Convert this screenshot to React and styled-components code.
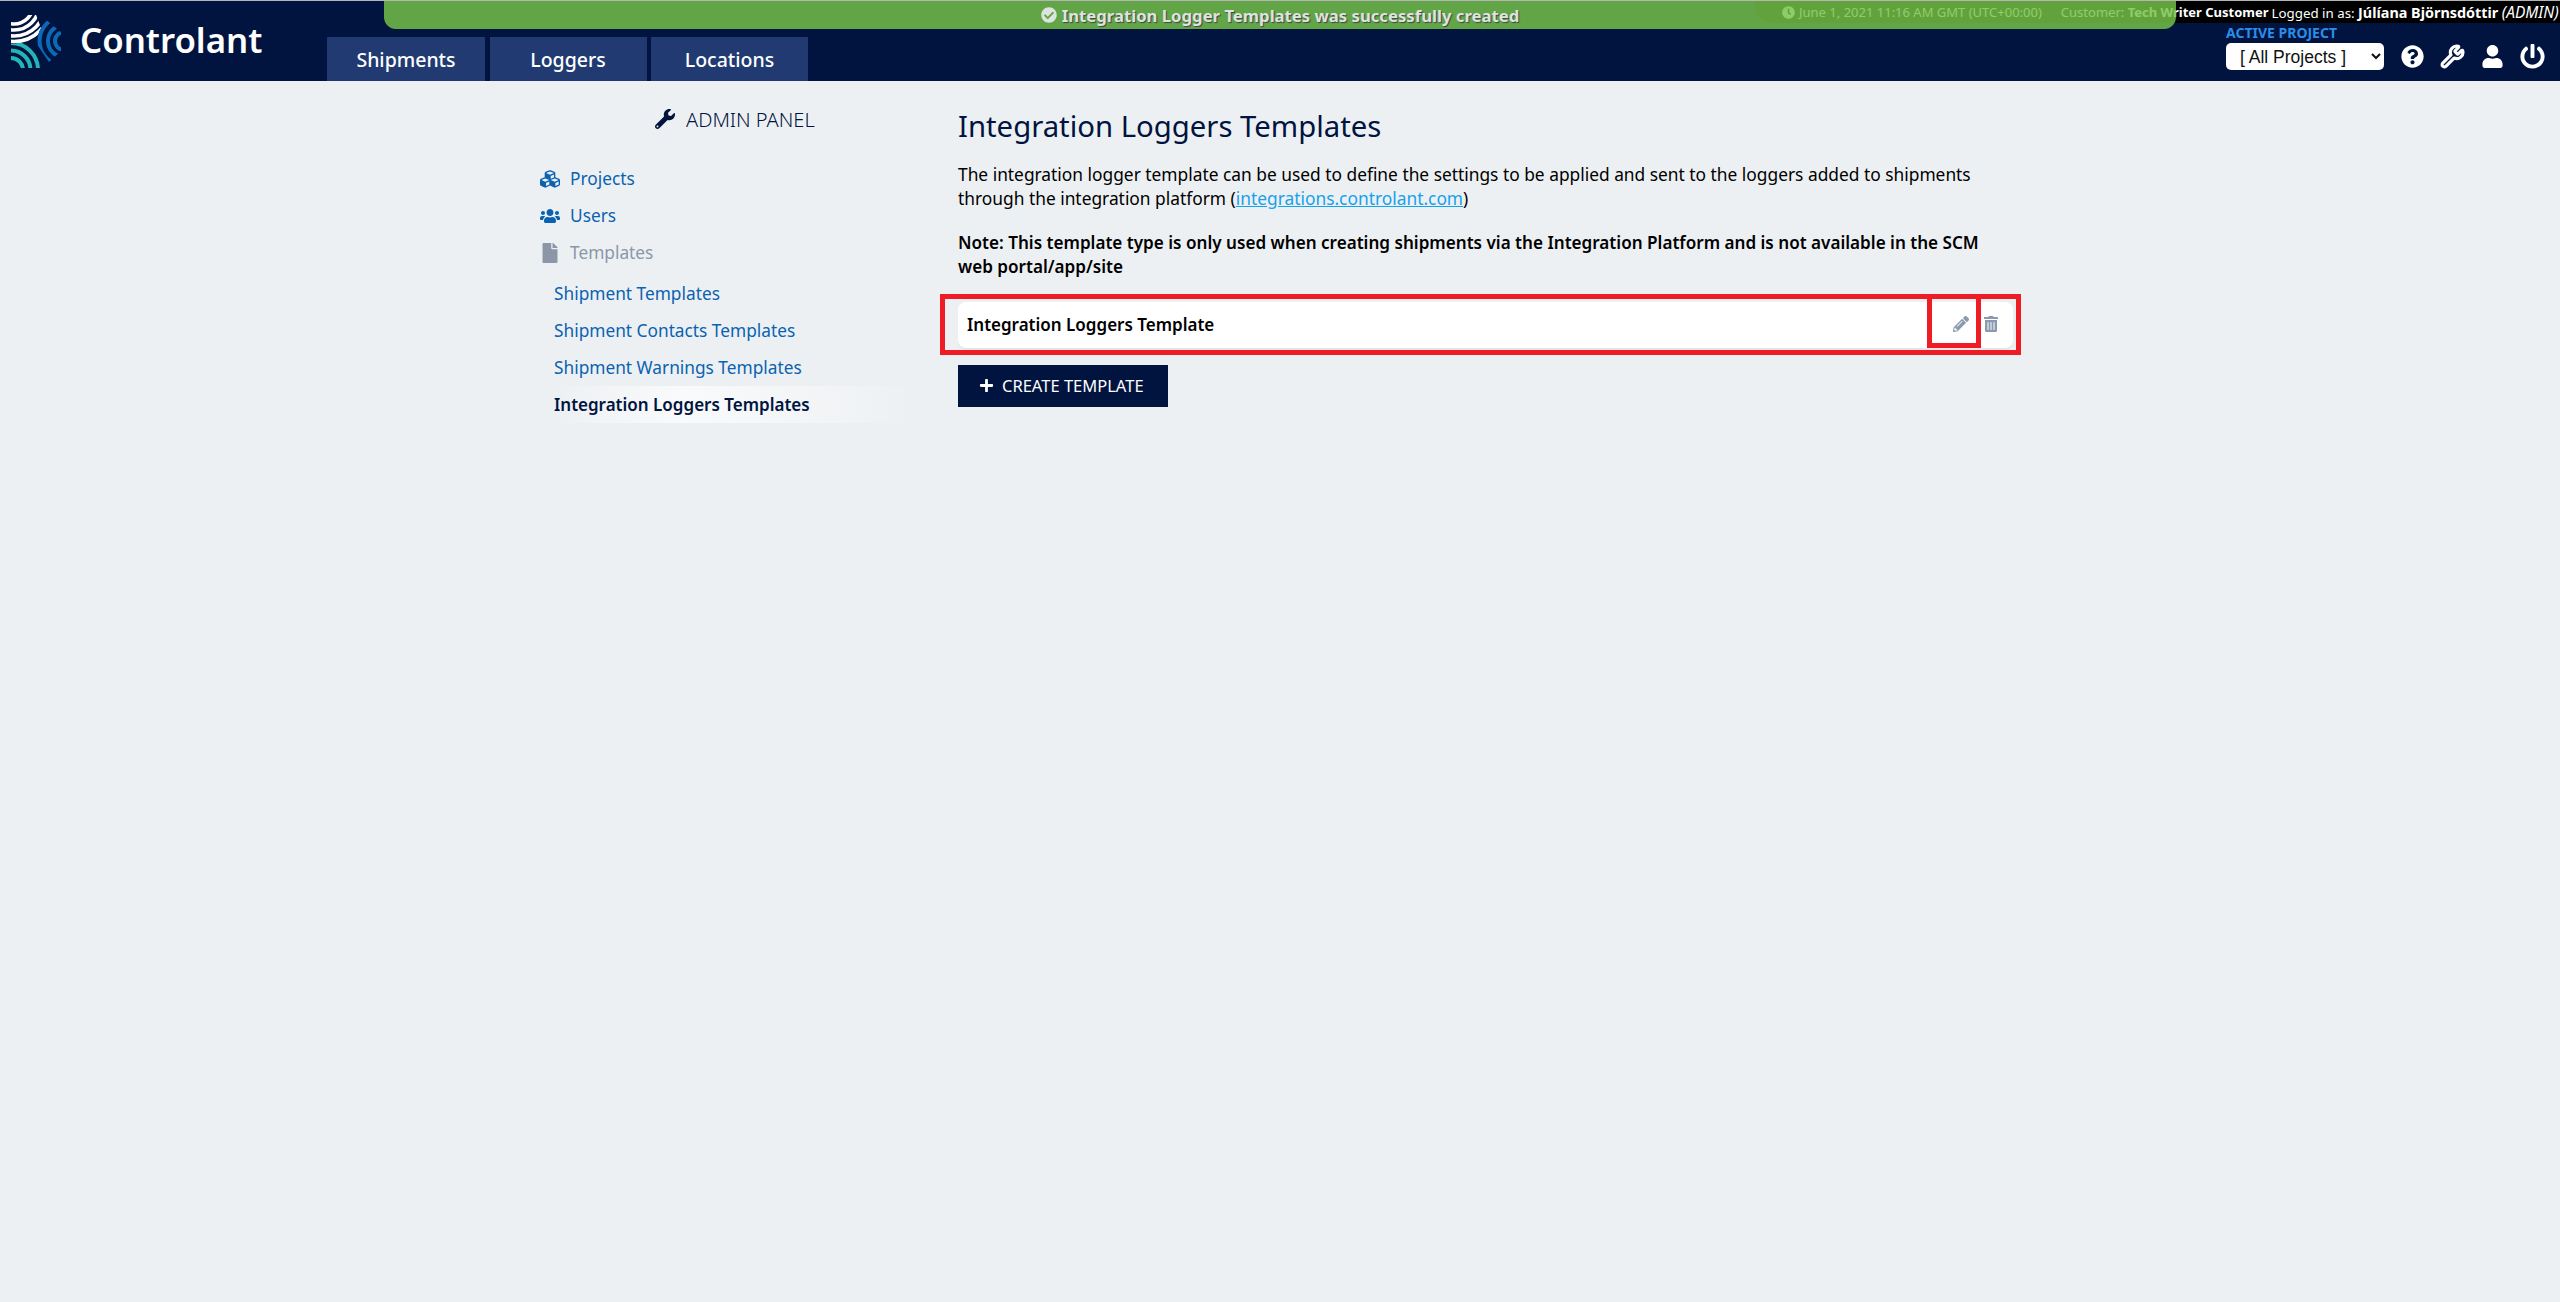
import React from 'react';
import styled, { createGlobalStyle } from 'styled-components';
import { FaWrench, FaCubes, FaUsers, FaFile, FaPencilAlt, FaTrashAlt, FaPlus, FaQuestionCircle, FaUser, FaPowerOff, FaClock, FaCheckCircle } from 'react-icons/fa';
import { Wrench } from 'lucide-react';

const NAVY = '#00143f';
const FONT = '"Noto Sans", "Open Sans", sans-serif';

const Global = createGlobalStyle`
  html, body { margin: 0; padding: 0; background: #edf0f3; }
  body { font-family: ${FONT}; min-height: 1302px; }
  * { box-sizing: border-box; }
`;

const Page = styled.div`
  position: relative;
  width: 2560px;
  min-height: 1302px;
  background: #edf0f3;
`;

const Header = styled.header`
  display: flex;
  height: 81px;
  background: ${NAVY};
  border-top: 1px solid #b5b5b5;
`;

const Brand = styled.div`
  display: flex;
  align-items: center;
  width: 327px;
  padding: 0 0 0 11px;
  gap: 19px;
  flex: none;
`;

const BrandName = styled.span`
  color: #fff;
  font-size: 34.8px;
  font-weight: 600;
  line-height: 1;
  margin-top: -1px;
`;

const Tabs = styled.nav`
  display: flex;
  align-self: flex-end;
  gap: 4.5px;
`;

const Tab = styled.a`
  display: flex;
  align-items: center;
  justify-content: center;
  width: ${p => p.$w}px;
  height: 44px;
  background: #213a72;
  color: #fff;
  font-size: 19.5px;
  font-weight: 500;
`;

const RightColumn = styled.div`
  margin-left: auto;
  width: 805px;
  display: flex;
  flex-direction: column;
`;

const InfoStrip = styled.div`
  height: 22px;
  background: #000;
  border-bottom-left-radius: 16px;
  color: #fff;
  display: flex;
  align-items: center;
  font-size: 13px;
  white-space: nowrap;
  padding-left: 27px;
`;

const InfoDate = styled.span`
  display: inline-flex;
  align-items: center;
  gap: 4px;
  margin-right: 19px;
`;

const InfoCustomer = styled.span`
  margin-right: 3px;
`;

const Strong = styled.b`
  font-weight: 700;
  color: #fff;
  font-size: ${p => (p.$large ? '14.4px' : 'inherit')};
`;

const InfoUser = styled.span`
  font-size: 13.3px;
`;

const Role = styled.i`
  font-size: 15.5px;
`;

const Controls = styled.div`
  display: flex;
  justify-content: flex-end;
  align-items: flex-end;
  padding-right: 15px;
  height: 58px;
  padding-bottom: 11px;
`;

const ProjectBox = styled.div`
  display: flex;
  flex-direction: column;
  margin-right: 17px;
`;

const ProjectLabel = styled.span`
  color: #2a8ee8;
  font-size: 14px;
  font-weight: 700;
  line-height: 18px;
  margin-bottom: 1px;
`;

const ProjectSelect = styled.select`
  width: 158px;
  height: 27px;
  border: none;
  border-radius: 5px;
  background: #fff;
  color: #111;
  font-family: "Liberation Sans", Arial, sans-serif;
  font-size: 17.5px;
  padding-left: 10px;
`;

const IconRow = styled.div`
  display: flex;
  align-items: center;
  gap: 16px;
  color: #fff;
  height: 27px;
`;

const Banner = styled.div`
  position: absolute;
  left: 384px;
  top: 1px;
  width: 1792px;
  height: 28px;
  background: rgba(118, 195, 73, 0.83);
  border-radius: 0 0 12px 12px;
  color: #dde3dd;
  display: flex;
  align-items: center;
  justify-content: center;
  gap: 5px;
  font-size: 16.7px;
  font-weight: 700;
  text-shadow: 1px 1px 1px #444;
`;

const BannerIcon = styled(FaCheckCircle)`
  flex: none;
`;

const Main = styled.main`
  display: flex;
  padding-left: 520px;
`;

const Sidebar = styled.aside`
  width: 438px;
  flex: none;
  padding-top: 19px;
`;

const AdminTitle = styled.div`
  display: flex;
  align-items: center;
  gap: 11px;
  height: 38px;
  margin-bottom: 22px;
  padding-left: 135px;
  color: ${NAVY};
  font-size: 20px;
  font-weight: 300;
`;

const SideItem = styled.a`
  display: flex;
  align-items: center;
  height: 37px;
  font-size: 17.3px;
  color: ${p => (p.$muted ? '#8b97a9' : '#0a62b0')};
`;

const SideIcon = styled.span`
  display: flex;
  justify-content: center;
  width: 24px;
  margin-left: 18px;
  margin-right: 8px;
  font-size: 20px;
`;

const SubList = styled.div`
  margin-top: 4px;
`;

const SubItem = styled.a`
  display: flex;
  align-items: center;
  height: 37px;
  margin-left: 34px;
  width: 365px;
  font-size: ${p => (p.$active ? 17 : 17.3)}px;
  color: ${p => (p.$active ? NAVY : '#0a62b0')};
  font-weight: ${p => (p.$active ? 600 : 400)};
  background: ${p => (p.$active ? 'linear-gradient(to right, #edf0f3 0%, #f9fafb 35%, #edf0f3 100%)' : 'none')};
`;

const Content = styled.section`
  width: 1055px;
  padding-top: 25px;
`;

const Title = styled.h1`
  margin: 0 0 16px;
  color: ${NAVY};
  font-size: 29.3px;
  font-weight: 400;
  line-height: 40px;
`;

const Para = styled.p`
  margin: 0 0 21px;
  color: #000;
  font-size: ${p => (p.$bold ? 17.1 : 17.35)}px;
  line-height: 24px;
  font-weight: ${p => (p.$bold ? 600 : 400)};
  white-space: nowrap;
`;

const Link = styled.a`
  color: #16a2ea;
  text-decoration: underline;
`;

const TemplateRow = styled.div`
  position: relative;
  display: flex;
  align-items: center;
  height: 46px;
  margin-top: 23px;
  margin-bottom: 17px;
  padding: 0 14px 0 9px;
  background: #fff;
  border-radius: 8px;
  box-shadow: 0 2px 0 #e2e6ea;
`;

const RowName = styled.span`
  flex: 1;
  color: #000;
  font-size: 17px;
  font-weight: 600;
  margin-top: -2px;
`;

const RowIcon = styled.span`
  display: flex;
  color: #8a99ad;
  font-size: 16px;
  margin-left: 14px;
  margin-top: -2px;
`;

const RedFrame = styled.div`
  position: absolute;
  top: -8px;
  border: 5px solid #ee1c25;
  pointer-events: none;
`;

const OuterFrame = styled(RedFrame)`
  left: -18px;
  right: -8px;
  bottom: -7px;
`;

const InnerFrame = styled(RedFrame)`
  right: 32px;
  width: 54px;
  height: 54px;
`;

const CreateButton = styled.button`
  display: flex;
  align-items: center;
  gap: 8px;
  width: 210px;
  height: 42px;
  padding: 0 0 2px 21px;
  border: none;
  background: ${NAVY};
  color: #fff;
  font-family: ${FONT};
  font-size: 16.5px;
  text-transform: uppercase;
`;

const Logo = () => (
  <svg width="50" height="53" viewBox="11 15 50 53" fill="none" style={{ flex: 'none' }}>
    <defs>
      <clipPath id="logo-white"><polygon points="11,20 35,12 41,28 34,44 11,45" /></clipPath>
      <clipPath id="logo-blue"><polygon points="44,18 62,33 62,50 49,62 34,40" /></clipPath>
      <clipPath id="logo-teal"><polygon points="11,44 33,41 40,52 40,68 11,68" /></clipPath>
    </defs>
    <g stroke="#fff" strokeWidth="3.6" clipPath="url(#logo-white)">
      <circle cx="14" cy="5" r="19" />
      <circle cx="14" cy="5" r="25" />
      <circle cx="14" cy="5" r="31" />
      <circle cx="14" cy="5" r="36.5" />
    </g>
    <g stroke="#0b6ab8" strokeWidth="4" clipPath="url(#logo-blue)">
      <circle cx="64" cy="41" r="9" />
      <circle cx="64" cy="41" r="16" />
      <circle cx="64" cy="41" r="24.5" />
    </g>
    <g stroke="#25b5b5" strokeWidth="4" clipPath="url(#logo-teal)">
      <circle cx="11" cy="70" r="12" />
      <circle cx="11" cy="70" r="19.5" />
      <circle cx="11" cy="70" r="27" />
    </g>
  </svg>
);

export default function App() {
  return (
    <Page>
      <Global />
      <Header>
        <Brand>
          <Logo />
          <BrandName>Controlant</BrandName>
        </Brand>
        <Tabs>
          <Tab $w={158}>Shipments</Tab>
          <Tab $w={157}>Loggers</Tab>
          <Tab $w={157}>Locations</Tab>
        </Tabs>
        <RightColumn>
          <InfoStrip>
            <InfoDate><FaClock size={13} /> June 1, 2021 11:16 AM GMT (UTC+00:00)</InfoDate>
            <InfoCustomer>Customer: <Strong>Tech Writer Customer</Strong></InfoCustomer>
            <InfoUser>Logged in as: <Strong $large>Júlíana Björnsdóttir</Strong> <Role>(ADMIN)</Role></InfoUser>
          </InfoStrip>
          <Controls>
            <ProjectBox>
              <ProjectLabel>ACTIVE PROJECT</ProjectLabel>
              <ProjectSelect defaultValue="all">
                <option value="all">[ All Projects ]</option>
              </ProjectSelect>
            </ProjectBox>
            <IconRow>
              <FaQuestionCircle size={23} />
              <Wrench size={25} strokeWidth={3} />
              <FaUser size={23} />
              <FaPowerOff size={25} />
            </IconRow>
          </Controls>
        </RightColumn>
      </Header>
      <Banner><BannerIcon size={16} /> Integration Logger Templates was successfully created</Banner>
      <Main>
        <Sidebar>
          <AdminTitle><FaWrench size={20} /> ADMIN PANEL</AdminTitle>
          <SideItem><SideIcon><FaCubes /></SideIcon>Projects</SideItem>
          <SideItem><SideIcon><FaUsers /></SideIcon>Users</SideItem>
          <SideItem $muted><SideIcon><FaFile /></SideIcon>Templates</SideItem>
          <SubList>
            <SubItem>Shipment Templates</SubItem>
            <SubItem>Shipment Contacts Templates</SubItem>
            <SubItem>Shipment Warnings Templates</SubItem>
            <SubItem $active>Integration Loggers Templates</SubItem>
          </SubList>
        </Sidebar>
        <Content>
          <Title>Integration Loggers Templates</Title>
          <Para>
            The integration logger template can be used to define the settings to be applied and sent to the loggers added to shipments
            <br />
            through the integration platform (<Link>integrations.controlant.com</Link>)
          </Para>
          <Para $bold>
            Note: This template type is only used when creating shipments via the Integration Platform and is not available in the SCM
            <br />
            web portal/app/site
          </Para>
          <TemplateRow>
            <RowName>Integration Loggers Template</RowName>
            <RowIcon><FaPencilAlt /></RowIcon>
            <RowIcon><FaTrashAlt /></RowIcon>
            <OuterFrame />
            <InnerFrame />
          </TemplateRow>
          <CreateButton><FaPlus size={15} /> Create Template</CreateButton>
        </Content>
      </Main>
    </Page>
  );
}
